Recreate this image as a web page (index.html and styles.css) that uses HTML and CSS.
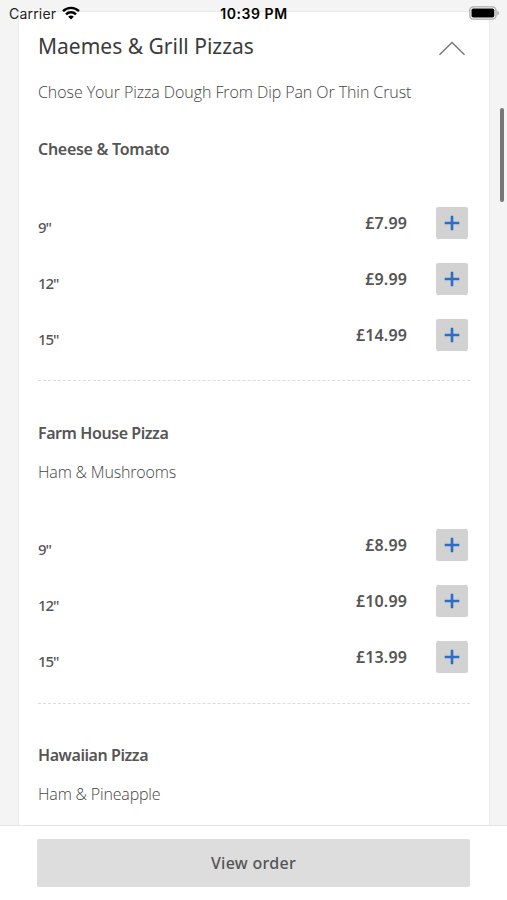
FILE: index.html
```html
<!DOCTYPE html>
<html lang="en">
<head>
<meta charset="utf-8">
<title>Menu</title>
<link rel="stylesheet" href="styles.css">
</head>
<body>
<svg width="0" height="0" class="defs"><symbol id="plus" viewBox="0 0 16 16"><path d="M8 .7v14.6M.7 8h14.6" stroke="#2a6fc5" stroke-width="2.6"/></symbol></svg>
<div class="screen">
  <header class="status">
    <div class="carrier"><span class="carrier-name">Carrier</span>
      <svg class="wifi" width="18" height="14" viewBox="0 0 18 14" fill="none" stroke="#000" stroke-width="2.4"><path d="M1 5.2C5.5 .7 12.5.7 17 5.2M4 8.4c2.8-2.8 7.2-2.8 10 0"/><path d="M9 13.5 6.2 10.7c1.6-1.5 4-1.5 5.6 0z" fill="#000" stroke="none"/></svg>
    </div>
    <span class="time">10:39 PM</span>
    <svg class="battery" width="31" height="14" viewBox="0 0 31 14"><rect x=".8" y=".8" width="26.2" height="12.4" rx="3.6" fill="#fff" stroke="#aaa" stroke-width="1.3"/><rect x="2.5" y="2.5" width="22.8" height="9" rx="1.8"/><path d="M28.3 4.7c2.2.8 2.2 3.8 0 4.6z" fill="#aaa"/></svg>
  </header>
  <main class="card">
    <div class="category">
      <h1 class="category-title">Maemes &amp; Grill Pizzas</h1>
      <svg class="chevron" width="28" height="15" viewBox="0 0 28 15" fill="none" stroke="#777" stroke-width="1.4"><path d="M1.5 13.7 14 1.5l12.5 12.2"/></svg>
    </div>
    <p class="desc intro">Chose Your Pizza Dough From Dip Pan Or Thin Crust</p>
    <section class="item first">
      <h2 class="name cheese">Cheese &amp; Tomato</h2>
      <div class="options">
        <div class="option"><span class="size">9"</span><span class="price">£7.99</span><button class="add"><svg class="plus"><use href="#plus"/></svg></button></div>
        <div class="option"><span class="size">12"</span><span class="price">£9.99</span><button class="add"><svg class="plus"><use href="#plus"/></svg></button></div>
        <div class="option"><span class="size">15"</span><span class="price">£14.99</span><button class="add"><svg class="plus"><use href="#plus"/></svg></button></div>
      </div>
    </section>
    <section class="item">
      <h2 class="name">Farm House Pizza</h2>
      <p class="desc">Ham &amp; Mushrooms</p>
      <div class="options">
        <div class="option"><span class="size">9"</span><span class="price">£8.99</span><button class="add"><svg class="plus"><use href="#plus"/></svg></button></div>
        <div class="option"><span class="size">12"</span><span class="price">£10.99</span><button class="add"><svg class="plus"><use href="#plus"/></svg></button></div>
        <div class="option"><span class="size">15"</span><span class="price">£13.99</span><button class="add"><svg class="plus"><use href="#plus"/></svg></button></div>
      </div>
    </section>
    <section class="item last">
      <h2 class="name">Hawaiian Pizza</h2>
      <p class="desc">Ham &amp; Pineapple</p>
    </section>
  </main>
  <footer class="footer"><button class="order">View order</button></footer>
  <div class="scrollbar"></div>
</div>
</body>
</html>
```
FILE: styles.css
```css
* { box-sizing: border-box; }
body { margin: 0; font-family: "Noto Sans", "Open Sans", sans-serif; color: #555; }
h1, h2, p { margin: 0; white-space: nowrap; }
button { border: 0; padding: 0; font: inherit; color: inherit; }
.defs { display: block; height: 0; }
.screen { position: relative; height: 900px; display: flex; flex-direction: column; background: #f4f4f4; overflow: hidden; }
.status { position: absolute; z-index: 2; top: 0; left: 0; right: 0; height: 27px; padding: 0 7px 0 9px; display: grid; grid-template-columns: 1fr auto 1fr; align-items: center; font: 14px Inter, sans-serif; color: #000; }
.carrier { display: flex; align-items: center; gap: 6px; }
.carrier-name { color: #222; letter-spacing: 0.2px; }
.wifi { margin-top: -2px; }
.time { font-weight: 600; letter-spacing: 0.55px; margin-right: 1px; }
.battery { justify-self: end; margin-top: -1px; }
.card { flex: 1; min-height: 0; overflow: hidden; margin: 11px 17px 0 18px; padding: 0 19px; border: 1px solid #e9e9e9; border-bottom: 0; background: #fff; }
.category { height: 68px; display: flex; align-items: center; justify-content: space-between; margin-right: 4px; }
.category-title { font-size: 21px; font-weight: 400; line-height: 28px; letter-spacing: 0; color: #3b3b3b; }
.chevron { margin-top: 4px; }
.desc { font-family: "Open Sans", sans-serif; font-size: 16px; font-weight: 300; line-height: 24px; letter-spacing: -0.17px; color: #444; }
.intro { letter-spacing: -0.08px; }
.item { padding: 40px 0 18px; border-bottom: 1px dashed #ddd; }
.item.first { padding: 33px 0 17px; }
.item.last { padding-top: 39px; border-bottom: 0; }
.name { font-size: 16px; font-weight: 600; line-height: 24px; letter-spacing: -0.43px; }
.cheese { letter-spacing: -0.28px; }
.name + .desc { margin-top: 15px; }
.options { margin-top: 33px; }
.first .options { margin-top: 34px; }
.option { height: 56px; display: flex; align-items: center; padding-right: 2px; }
.size { flex: 1; font-size: 15px; font-weight: 500; padding-top: 8px; letter-spacing: -1.1px; }
.price { font-size: 16px; font-weight: 600; letter-spacing: 0.15px; margin-right: 29px; }
.add { display: grid; place-items: center; width: 32px; height: 32px; border-radius: 2px; background: #d2d2d2; }
.plus { display: block; width: 16px; height: 16px; }
.footer { height: 75px; flex: none; padding: 13px 37px 12px; border-top: 1px solid #e4e4e4; background: #fff; }
.order { display: block; width: 433px; height: 48px; border-radius: 2px; background: #ddd; color: #555; font-size: 16px; font-weight: 500; letter-spacing: 0.3px; }
.scrollbar { position: absolute; top: 108px; right: 3px; width: 4px; height: 94px; border-radius: 2px; background: #777; }
```
